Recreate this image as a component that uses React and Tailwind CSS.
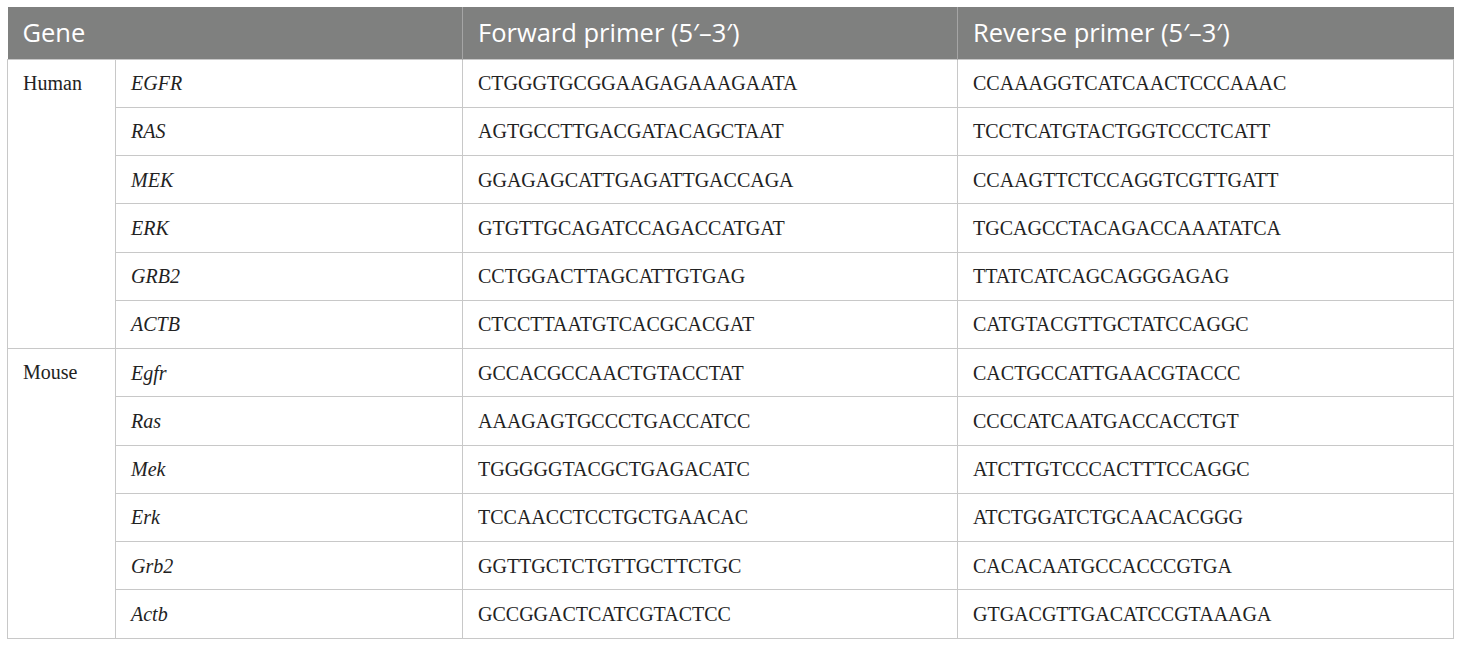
import React from "react";

const human = [
  ["EGFR", "CTGGGTGCGGAAGAGAAAGAATA", "CCAAAGGTCATCAACTCCCAAAC"],
  ["RAS", "AGTGCCTTGACGATACAGCTAAT", "TCCTCATGTACTGGTCCCTCATT"],
  ["MEK", "GGAGAGCATTGAGATTGACCAGA", "CCAAGTTCTCCAGGTCGTTGATT"],
  ["ERK", "GTGTTGCAGATCCAGACCATGAT", "TGCAGCCTACAGACCAAATATCA"],
  ["GRB2", "CCTGGACTTAGCATTGTGAG", "TTATCATCAGCAGGGAGAG"],
  ["ACTB", "CTCCTTAATGTCACGCACGAT", "CATGTACGTTGCTATCCAGGC"],
];
const mouse = [
  ["Egfr", "GCCACGCCAACTGTACCTAT", "CACTGCCATTGAACGTACCC"],
  ["Ras", "AAAGAGTGCCCTGACCATCC", "CCCCATCAATGACCACCTGT"],
  ["Mek", "TGGGGGTACGCTGAGACATC", "ATCTTGTCCCACTTTCCAGGC"],
  ["Erk", "TCCAACCTCCTGCTGAACAC", "ATCTGGATCTGCAACACGGG"],
  ["Grb2", "GGTTGCTCTGTTGCTTCTGC", "CACACAATGCCACCCGTGA"],
  ["Actb", "GCCGGACTCATCGTACTCC", "GTGACGTTGACATCCGTAAAGA"],
];

const td = "border border-[#c8c8c8] px-[15px] h-[48.25px] align-middle";

function Group({ label, rows }) {
  return rows.map((r, i) => (
    <tr key={r[0]}>
      {i === 0 && (
        <td rowSpan={rows.length} className="border border-[#c8c8c8] px-[15px] align-top pt-[13px]">
          {label}
        </td>
      )}
      <td className={td + " italic"}>{r[0]}</td>
      <td className={td}>{r[1]}</td>
      <td className={td}>{r[2]}</td>
    </tr>
  ));
}

export default function App() {
  return (
    <div className="w-[1460px] h-[646px] bg-white pt-[7px] pl-[7px]">
      <table
        className="border-collapse table-fixed w-[1446px] text-[20px] text-[#222] leading-none"
        style={{ fontFamily: '"Liberation Serif", serif' }}
      >
        <colgroup>
          <col className="w-[108px]" />
          <col className="w-[347px]" />
          <col className="w-[495px]" />
          <col className="w-[496px]" />
        </colgroup>
        <thead>
          <tr
            className="bg-[#7f807f] text-white text-[25.5px] h-[52px]"
            style={{ fontFamily: '"Open Sans", sans-serif' }}
          >
            <th colSpan={2} className="text-left font-normal px-[15px] border-r border-[#a5a5a5]">Gene</th>
            <th className="text-left font-normal px-[15px] border-r border-[#a5a5a5]">Forward primer (5′–3′)</th>
            <th className="text-left font-normal px-[15px]">Reverse primer (5′–3′)</th>
          </tr>
        </thead>
        <tbody>
          <Group label="Human" rows={human} />
          <Group label="Mouse" rows={mouse} />
        </tbody>
      </table>
    </div>
  );
}
